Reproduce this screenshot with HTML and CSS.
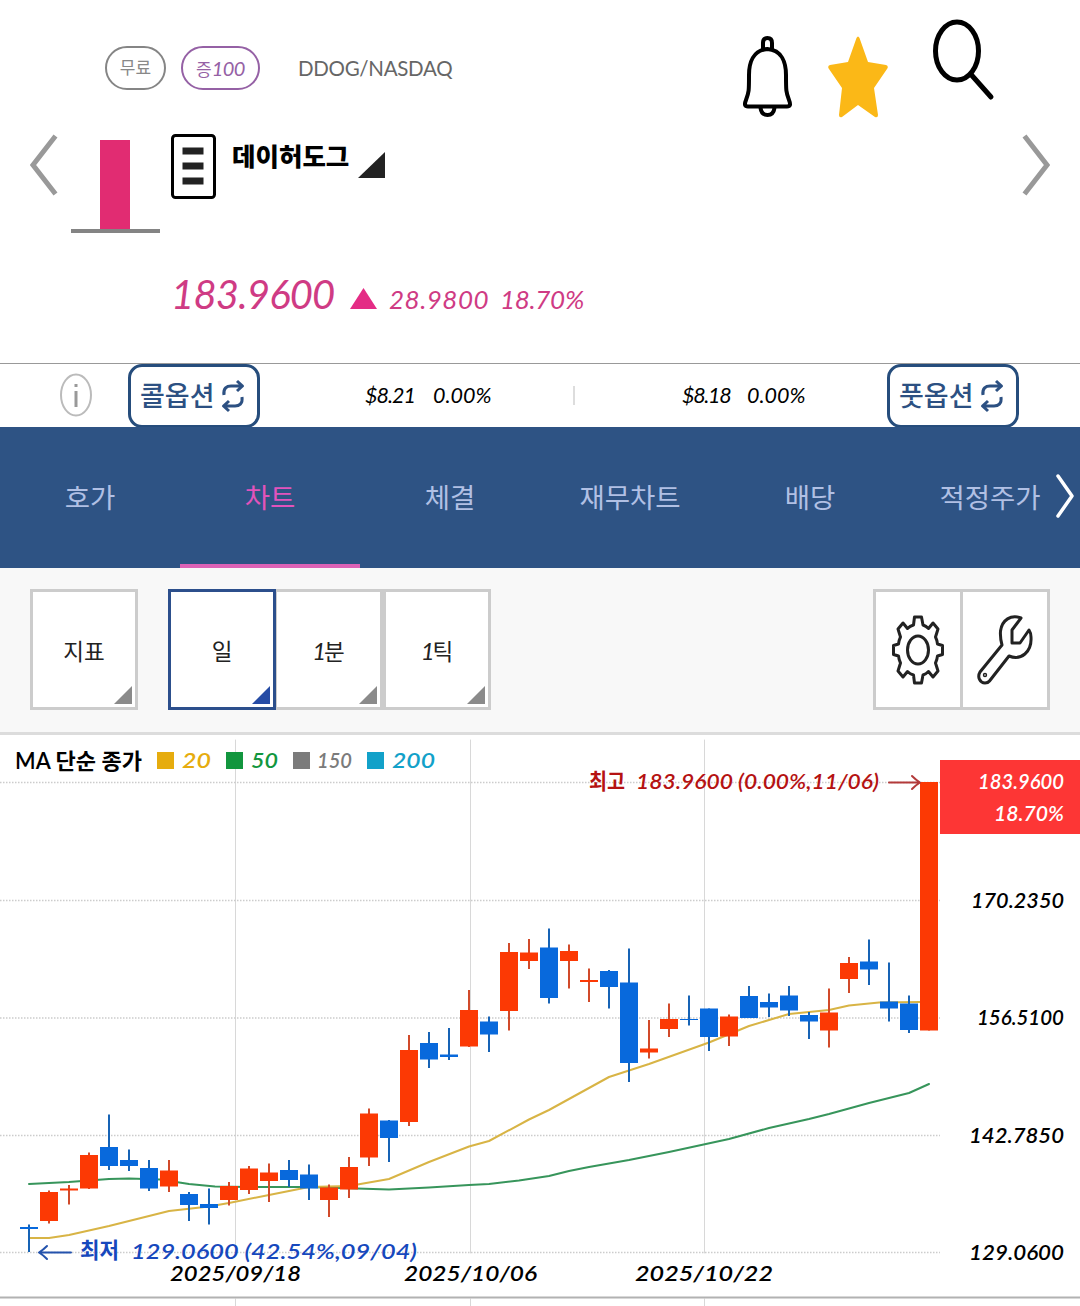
FILE: index.html
```html
<!DOCTYPE html>
<html lang="ko">
<head>
<meta charset="utf-8">
<title>데이허도그 차트</title>
<link rel="stylesheet" href="styles.css">
</head>
<body>
<main class="app">
  <header class="quote">
    <svg class="chevron" viewBox="0 0 30 64"><path d="M25.500 3 3 32 25.500 61"/></svg>
    <div class="daybar"><div class="daybar-body"></div></div>
    <div class="info">
      <div class="tags">
        <span class="pill">무료</span>
        <span class="pill pill-margin">증<i>100</i></span>
        <span class="symbol">DDOG/NASDAQ</span>
      </div>
      <div class="name-row">
        <svg class="doc" viewBox="0 0 45 65"><rect x="1.5" y="1.5" width="42" height="62" rx="3"/><path d="M11.500 17h21M11.500 32h21M11.500 47h21"/></svg>
        <strong class="name">데이허도그</strong>
        <span class="corner"></span>
      </div>
      <div class="price-row">
        <span class="price">183.9600</span>
        <span class="up"></span>
        <span class="change">28.9800</span>
        <span class="rate">18.70%</span>
      </div>
    </div>
    <div class="actions">
      <svg class="bell" viewBox="0 0 50 82"><path d="M20 13V7q0-5 4.500-5t4.500 5v6M24.500 13C10 14 6 27 6 39c0 16 0 17-3 25-2 5-1 6.500 2 6.500h39c3 0 4-1.500 2-6.500-3-8-3-9-3-25C43 27 39 14 24.500 13ZM17.500 72q1 7 7 7t7-7"/></svg>
      <svg class="star" viewBox="0 0 60 82"><path d="M28.500 2Q30 -1 31.500 2L40 26 58 29Q61 30 59 33L46 52 50 79Q50 82 47 81L30 69 14 81Q11 82 11 79L14 52 1 33Q-1 30 2 29L20 26Z"/></svg>
      <svg class="search" viewBox="0 0 62 82"><ellipse cx="24" cy="32" rx="21.500" ry="29"/><path d="M38.500 56 58 78"/></svg>
    </div>
    <svg class="chevron chevron-next" viewBox="0 0 30 64"><path d="M4.500 3 27 32 4.500 61"/></svg>
  </header>

  <section class="options">
    <svg class="about" viewBox="0 0 32 44"><ellipse cx="16" cy="22" rx="15" ry="20.500"/><path d="M16 18v16M16 11v3"/></svg>
    <button class="option option-call">콜옵션
      <svg class="swap" viewBox="0 0 24 34"><path d="M3 16C2 9 6 7 10 7h11M16 2l5.500 5-5.500 5M21 18c1 7-3 9-7 9H3M8 22l-5.500 5 5.500 5"/></svg></button>
    <span class="quote-call"><i>$8.21</i><i>0.00%</i></span>
    <span class="divider"></span>
    <span class="quote-put"><i>$8.18</i><i>0.00%</i></span>
    <button class="option option-put">풋옵션
      <svg class="swap" viewBox="0 0 24 34"><path d="M3 16C2 9 6 7 10 7h11M16 2l5.500 5-5.500 5M21 18c1 7-3 9-7 9H3M8 22l-5.500 5 5.500 5"/></svg></button>
  </section>

  <nav class="tabs">
    <a class="tab">호가</a>
    <a class="tab tab-active">차트</a>
    <a class="tab">체결</a>
    <a class="tab">재무차트</a>
    <a class="tab">배당</a>
    <a class="tab">적정주가</a>
    <svg class="more" viewBox="0 0 20 44"><path d="M3 2 17 22 3 42"/></svg>
  </nav>

  <section class="toolbar">
    <button class="tool">지표</button>
    <div class="periods">
      <button class="tool tool-active">일</button>
      <button class="tool"><i>1</i>분</button>
      <button class="tool"><i>1</i>틱</button>
    </div>
    <div class="settings">
      <span class="setting"><svg viewBox="0 0 52 70"><path d="M21.500 10 22.500 2h7l1.500 8q3 1 5.500 3.500L41 8l5 6-2.500 8q1.500 3 2 7l5 1.500v9l-5 1.500q-.5 4-2 7l2.500 8-5 6-4.500-5.500Q34 59 31 60l-1.500 8h-7l-1-8q-3.500-1-6-3.500L11 62l-5-6 2.500-8q-1.500-3-2-7l-5-1.500v-9l5-1.500q.5-4 2-7L6 14l5-6 4.500 5.500Q18 11 21.500 10Z"/><ellipse cx="26" cy="35" rx="10.500" ry="14"/></svg></span>
      <span class="setting"><svg viewBox="0 0 56 70"><path d="M44 3C34-1 25 5 23.500 16q-.5 7 1.500 14L3 57c-3 5 0 11 5 11q3 0 4.500-2L32 41c12 5 23-4 22-19q0-4-2-7l-9 13h-8V15Z"/><circle cx="8" cy="60" r=".7"/></svg></span>
    </div>
  </section>

  <section class="chart">
    <svg class="plot" viewBox="0 735 1080 571">
      <g class="grid-v"><path d="M235.500 740V1253M470.500 740V1253M704.500 740V1253M235.500 1299V1306M470.500 1299V1306M704.500 1299V1306"/></g>
      <g class="grid-h"><path d="M0 782.500H940M0 900.500H940M0 1018H940M0 1135.500H940M0 1252.500H940"/></g>
      <path class="base" d="M0 1297.500H1080"/>
      <polyline class="ma50" points="29,1184 69,1182 109,1179 129,1178.500 160,1179.500 189,1184 215,1186.500 249,1187 309,1187 389,1189.500 429,1187.500 469,1185 489,1184 519,1180.500 549,1176 569,1171 589,1167 629,1160 669,1152 729,1139 769,1128 809,1119 829,1114 849,1108.500 869,1103 909,1093 929,1084"/>
      <polyline class="ma20" points="30,1238 49,1238 69,1235 109,1226 169,1211 209,1206.500 229,1203 269,1195 309,1187 349,1186 389,1179 429,1162 469,1146.500 489,1141 529,1119.500 549,1110 609,1077 649,1064 709,1042.500 749,1026 789,1014 829,1010 849,1005.500 879,1002.500 920,1002"/>
      <g id="candles"></g>

      <text class="label" x="15" y="769" textLength="127" lengthAdjust="spacingAndGlyphs">MA 단순 종가</text>
      <rect class="c20" x="157" y="752" width="17" height="17"/>
      <text class="num c20" x="182" y="768" textLength="29" lengthAdjust="spacingAndGlyphs">20</text>
      <rect class="c50" x="226" y="752" width="17" height="17"/>
      <text class="num c50" x="251" y="768" textLength="27" lengthAdjust="spacingAndGlyphs">50</text>
      <rect class="c150" x="293" y="752" width="17" height="17"/>
      <text class="num c150" x="317" y="768" textLength="35" lengthAdjust="spacingAndGlyphs">150</text>
      <rect class="c200" x="367" y="752" width="17" height="17"/>
      <text class="num c200" x="392" y="768" textLength="43" lengthAdjust="spacingAndGlyphs">200</text>

      <text class="label high" x="589" y="789" textLength="36" lengthAdjust="spacingAndGlyphs">최고</text>
      <text class="num high" x="636" y="789" textLength="243" lengthAdjust="spacingAndGlyphs">183.9600 (0.00%,11/06)</text>
      <path class="arrow high-line" d="M889 782.500H919M912 776q4 4 8 6.500-4 2.500-8 6.500"/>
      <text class="label low" x="80" y="1258" textLength="39" lengthAdjust="spacingAndGlyphs">최저</text>
      <text class="num low" x="131" y="1259" textLength="286" lengthAdjust="spacingAndGlyphs">129.0600 (42.54%,09/04)</text>
      <path class="arrow low-line" d="M71 1252.500H41M47 1246q-4 4-8 6.500 4 2.500 8 6.500"/>

      <text class="num" x="170" y="1280.500" textLength="131" lengthAdjust="spacingAndGlyphs">2025/09/18</text>
      <text class="num" x="404" y="1280.500" textLength="133" lengthAdjust="spacingAndGlyphs">2025/10/06</text>
      <text class="num" x="635" y="1280.500" textLength="138" lengthAdjust="spacingAndGlyphs">2025/10/22</text>

      <rect class="badge" x="940" y="760" width="140" height="74"/>
      <text class="num now" x="978" y="789" textLength="86" lengthAdjust="spacingAndGlyphs">183.9600</text>
      <text class="num now" x="994" y="821" textLength="70" lengthAdjust="spacingAndGlyphs">18.70%</text>
      <text class="num" x="971" y="908" textLength="93" lengthAdjust="spacingAndGlyphs">170.2350</text>
      <text class="num" x="977" y="1025" textLength="87" lengthAdjust="spacingAndGlyphs">156.5100</text>
      <text class="num" x="969" y="1143" textLength="95" lengthAdjust="spacingAndGlyphs">142.7850</text>
      <text class="num" x="969" y="1260" textLength="95" lengthAdjust="spacingAndGlyphs">129.0600</text>
    </svg>
  </section>
</main>
<script src="chart.js"></script>
</body>
</html>
```
FILE: styles.css
```css
* { box-sizing: border-box; }

body {
  margin: 0;
  background: #fff;
  color: #111;
  font-family: Lato, "Noto Sans CJK KR", sans-serif;
}

svg { display: block; fill: none; stroke-linecap: round; stroke-linejoin: round; }
button { font: inherit; }

.app { width: 1080px; height: 1306px; overflow: hidden; }

/* Quote header */
.quote {
  display: flex;
  align-items: flex-start;
  height: 363px;
  padding: 0 30px;
}
.chevron {
  flex: none;
  width: 30px;
  height: 64px;
  margin-top: 133px;
  stroke: #999;
  stroke-width: 5;
  stroke-linecap: butt;
  stroke-linejoin: miter;
}
.daybar {
  flex: none;
  width: 89px;
  height: 93px;
  margin: 140px 0 0 11px;
  border-bottom: 4px solid #848484;
}
.daybar-body { width: 30px; height: 89px; margin-left: 29px; background: #e12c72; }
.info { flex: none; width: 560px; margin-left: 11px; }
.tags {
  display: flex;
  align-items: center;
  height: 44px;
  margin: 46px 0 0 -66px;
}
.pill {
  width: 61px;
  height: 44px;
  border: 2.500px solid #858585;
  border-radius: 22px;
  color: #888;
  font-size: 17px;
  line-height: 40px;
  text-align: center;
}
.pill-margin {
  width: 79px;
  margin-left: 15px;
  border-color: #9561a5;
  color: #9561a5;
  font-size: 17px;
}
.pill-margin i { font-size: 20px; letter-spacing: -0.5px; }
.symbol { margin-left: 38px; color: #666; font-size: 20.500px; letter-spacing: -0.3px; }
.name-row { display: flex; margin-top: 44px; }
.doc { width: 45px; height: 65px; stroke: #000; stroke-width: 3; }
.doc path { stroke: #222; stroke-width: 7; stroke-linecap: butt; }
.name {
  width: 126px;
  margin-left: 16px;
  color: #000;
  font-size: 25.500px;
  font-weight: 900;
  line-height: 45px;
  white-space: nowrap;
}
.corner {
  width: 27px;
  height: 26px;
  margin-top: 18px;
  background: #222;
  clip-path: polygon(100% 0, 100% 100%, 0 100%);
}
.price-row {
  display: flex;
  align-items: baseline;
  height: 60px;
  margin-top: 65px;
  color: #cf3b84;
  font-style: italic;
}
.price { width: 179px; font-size: 40px; line-height: 60px; letter-spacing: -0.8px; }
.up {
  width: 27px;
  height: 21px;
  background: #e42c85;
  clip-path: polygon(50% 0, 100% 100%, 0 100%);
}
.change { width: 111px; margin-left: 12px; font-size: 26px; letter-spacing: 0.5px; }
.rate { font-size: 26px; letter-spacing: -0.3px; }
.actions { display: flex; margin-left: 11px; width: 281px; padding-left: 1px; }
.bell { width: 50px; height: 82px; margin-top: 36px; stroke: #000; stroke-width: 4; }
.star { width: 60px; height: 82px; margin: 36px 0 0 35px; fill: #fbb817; }
.search { width: 62px; height: 82px; margin: 19px 0 0 45px; stroke: #000; stroke-width: 5; }
.chevron-next { margin-left: auto; }

/* Option quotes */
.options {
  display: flex;
  align-items: center;
  height: 64px;
  padding-left: 60px;
  border-top: 1px solid #999;
  color: #000;
}
.about { width: 32px; height: 44px; margin-top: -1px; stroke: #bbb; stroke-width: 2; }
.about path { stroke: #999; stroke-width: 3; stroke-linecap: butt; }
.option {
  display: flex;
  align-items: center;
  justify-content: space-between;
  width: 132px;
  height: 64px;
  padding: 0 12px 3px 9px;
  border: 3px solid #264d7c;
  border-radius: 14px;
  background: #fff;
  color: #2c5082;
  font-size: 27px;
  font-weight: 500;
  white-space: nowrap;
}
.option-call { margin-left: 36px; }
.option-put { margin-left: 77px; }
.swap { width: 24px; height: 34px; margin-top: 4px; stroke: #2c5082; stroke-width: 3; stroke-linecap: butt; }
.quote-call, .quote-put {
  display: flex;
  gap: 18px;
  width: 130px;
  margin-top: -2px;
  font-size: 21.500px;
}
.quote-call i:first-child, .quote-put i:first-child { width: 50px; letter-spacing: -1px; }
.quote-put i:first-child { width: 47px; letter-spacing: -1.300px; }
.quote-call { margin-left: 105px; }
.quote-put { width: 128px; margin-left: 107px; }
.divider { width: 2px; height: 19px; margin-left: 78px; background: #ddd; }

/* Tabs */
.tabs { position: relative; display: flex; height: 141px; background: #2e5384; }
.tab {
  flex: none;
  width: 180px;
  border-bottom: 4px solid transparent;
  color: #b1c0e4;
  font-size: 27.500px;
  line-height: 142px;
  text-align: center;
}
.tab-active { border-color: #dc62b6; color: #e253bc; }
.more {
  position: absolute;
  right: 5px;
  top: 47px;
  width: 20px;
  height: 44px;
  stroke: #fff;
  stroke-width: 3.500;
}

/* Toolbar */
.toolbar {
  display: flex;
  height: 167px;
  padding: 21px 30px 0;
  border-bottom: 3px solid #dcdcdc;
  background: #f8f8f8;
}
.tool {
  position: relative;
  width: 108px;
  height: 121px;
  padding: 0;
  border: 3px solid #ccc;
  background: #fff;
  color: #222;
  font-size: 22.500px;
}
.tool::after {
  content: "";
  position: absolute;
  right: 3px;
  bottom: 3px;
  width: 18px;
  height: 18px;
  background: #8a8a8a;
  clip-path: polygon(100% 0, 100% 100%, 0 100%);
}
.tool i { font-size: 24px; letter-spacing: -2px; }
.periods { display: flex; margin-left: 30px; }
.periods .tool + .tool { width: 108px; }
.periods .tool-active + .tool { width: 107px; border-left-width: 1px; }
.tool-active { border-color: #2c4f8c; }
.tool-active::after { background: #264ca5; }
.settings {
  display: flex;
  width: 177px;
  height: 121px;
  margin-left: auto;
  border: 3px solid #ccc;
  background: #fff;
}
.setting { display: flex; flex: 1; align-items: center; justify-content: center; }
.setting + .setting { border-left: 3px solid #ccc; }
.setting svg { width: 52px; height: 70px; overflow: visible; stroke: #222; stroke-width: 3; }
.setting + .setting svg { width: 56px; }

/* Chart */
.plot { width: 1080px; height: 571px; }
.grid-v { stroke: #d8d8d8; stroke-width: 1; }
.grid-h { stroke: #ccc; stroke-width: 1.500; stroke-dasharray: 1.500 1.500; stroke-linecap: butt; }
.base { stroke: #b2b2b2; stroke-width: 2; }
.ma20, .ma50 { stroke-width: 2; }
.ma20 { stroke: #d8b445; }
.ma50 { stroke: #37955b; }
.rise { fill: #fc3904; }
.fall { fill: #0869dc; }
.rise-wick { stroke: #d14a2a; stroke-width: 2; stroke-linecap: butt; }
.fall-wick { stroke: #1763b5; stroke-width: 2; stroke-linecap: butt; }
.label, .num { fill: #000; font-size: 22px; font-weight: 600; }
.num { font-size: 21.500px; font-style: italic; }
.label.high, .num.high { fill: #b51212; }
.label.low, .num.low { fill: #1648bd; }
.num.now { fill: #fff; }
.c20, .num.c20 { fill: #e6ac0e; }
.c50, .num.c50 { fill: #12963e; }
.c150, .num.c150 { fill: #7b7b7b; }
.c200, .num.c200 { fill: #12a1c9; }
.arrow { stroke-width: 2; }
.high-line { stroke: #b33a3a; }
.low-line { stroke: #2453ad; }
.badge { fill: #fd3635; }
```
FILE: chart.js
```javascript
// One row per session: direction, body top, body bottom, wick top, wick bottom.
const sessions = [
  [0, 1227, 1229, 1224.5, 1252], [1, 1192, 1221, 1190.5, 1223.5], [1, 1188.5, 1190.5, 1185, 1204.5],
  [1, 1155, 1188.5, 1152.5, 1189], [0, 1147, 1166, 1114.5, 1170], [0, 1160, 1166, 1149.5, 1171],
  [0, 1168, 1188.5, 1160, 1191], [1, 1170.5, 1186.5, 1160, 1192], [0, 1194, 1205, 1192, 1221],
  [0, 1204, 1208, 1188.5, 1224.5], [1, 1186, 1200, 1182, 1205.5], [1, 1168.5, 1190, 1166, 1194],
  [1, 1172.5, 1181, 1163.5, 1202], [0, 1170, 1180, 1160, 1187], [0, 1174.5, 1188.5, 1164.5, 1200],
  [1, 1187.5, 1200, 1184.5, 1217], [1, 1167, 1189.5, 1157, 1198], [1, 1113.5, 1157.5, 1108.5, 1166],
  [0, 1120.5, 1138, 1120, 1162], [1, 1050, 1122, 1035, 1126], [0, 1043, 1059.5, 1032, 1068],
  [0, 1054.5, 1057, 1028, 1060], [1, 1010, 1046.5, 990, 1047], [0, 1021.5, 1034.5, 1016.5, 1052],
  [1, 952, 1011, 943, 1030.5], [1, 952.5, 961, 939, 969], [0, 947.5, 998, 928.5, 1003.5],
  [1, 951, 961, 944.5, 988.5], [1, 980, 982, 968.5, 1002], [0, 971, 987, 970, 1008.5],
  [0, 982.5, 1063, 948.5, 1082], [1, 1048.5, 1052.5, 1020, 1058.5], [1, 1019, 1029, 1003.5, 1037],
  [0, 1019, 1020, 995.5, 1025.5], [0, 1008.5, 1037, 1008.5, 1051], [1, 1016.5, 1036.5, 1014.5, 1046],
  [0, 996, 1018, 986, 1018], [0, 1002, 1007.5, 993.5, 1017], [0, 995.5, 1010.5, 986, 1016],
  [0, 1015, 1021.5, 1012, 1039], [1, 1012.5, 1030.5, 988.5, 1047.5], [1, 963, 979, 957, 993],
  [0, 961.5, 969.5, 939.5, 985], [0, 1001.5, 1008.5, 962.5, 1021.5], [0, 1003.5, 1030, 995.5, 1033],
  [1, 782, 1030.5, 782, 1030.5]
];

const layer = document.getElementById("candles");
const draw = (tag, attrs) => {
  const node = document.createElementNS("http://www.w3.org/2000/svg", tag);
  for (const key in attrs) node.setAttribute(key, attrs[key]);
  layer.appendChild(node);
};

sessions.forEach(([up, top, bottom, high, low], i) => {
  const x = 29 + i * 20;
  const kind = up ? "rise" : "fall";
  draw("path", { class: kind + "-wick", d: `M${x} ${high}V${low}` });
  draw("rect", { class: kind, x: x - 9, y: top, width: 18, height: bottom - top });
});
```
